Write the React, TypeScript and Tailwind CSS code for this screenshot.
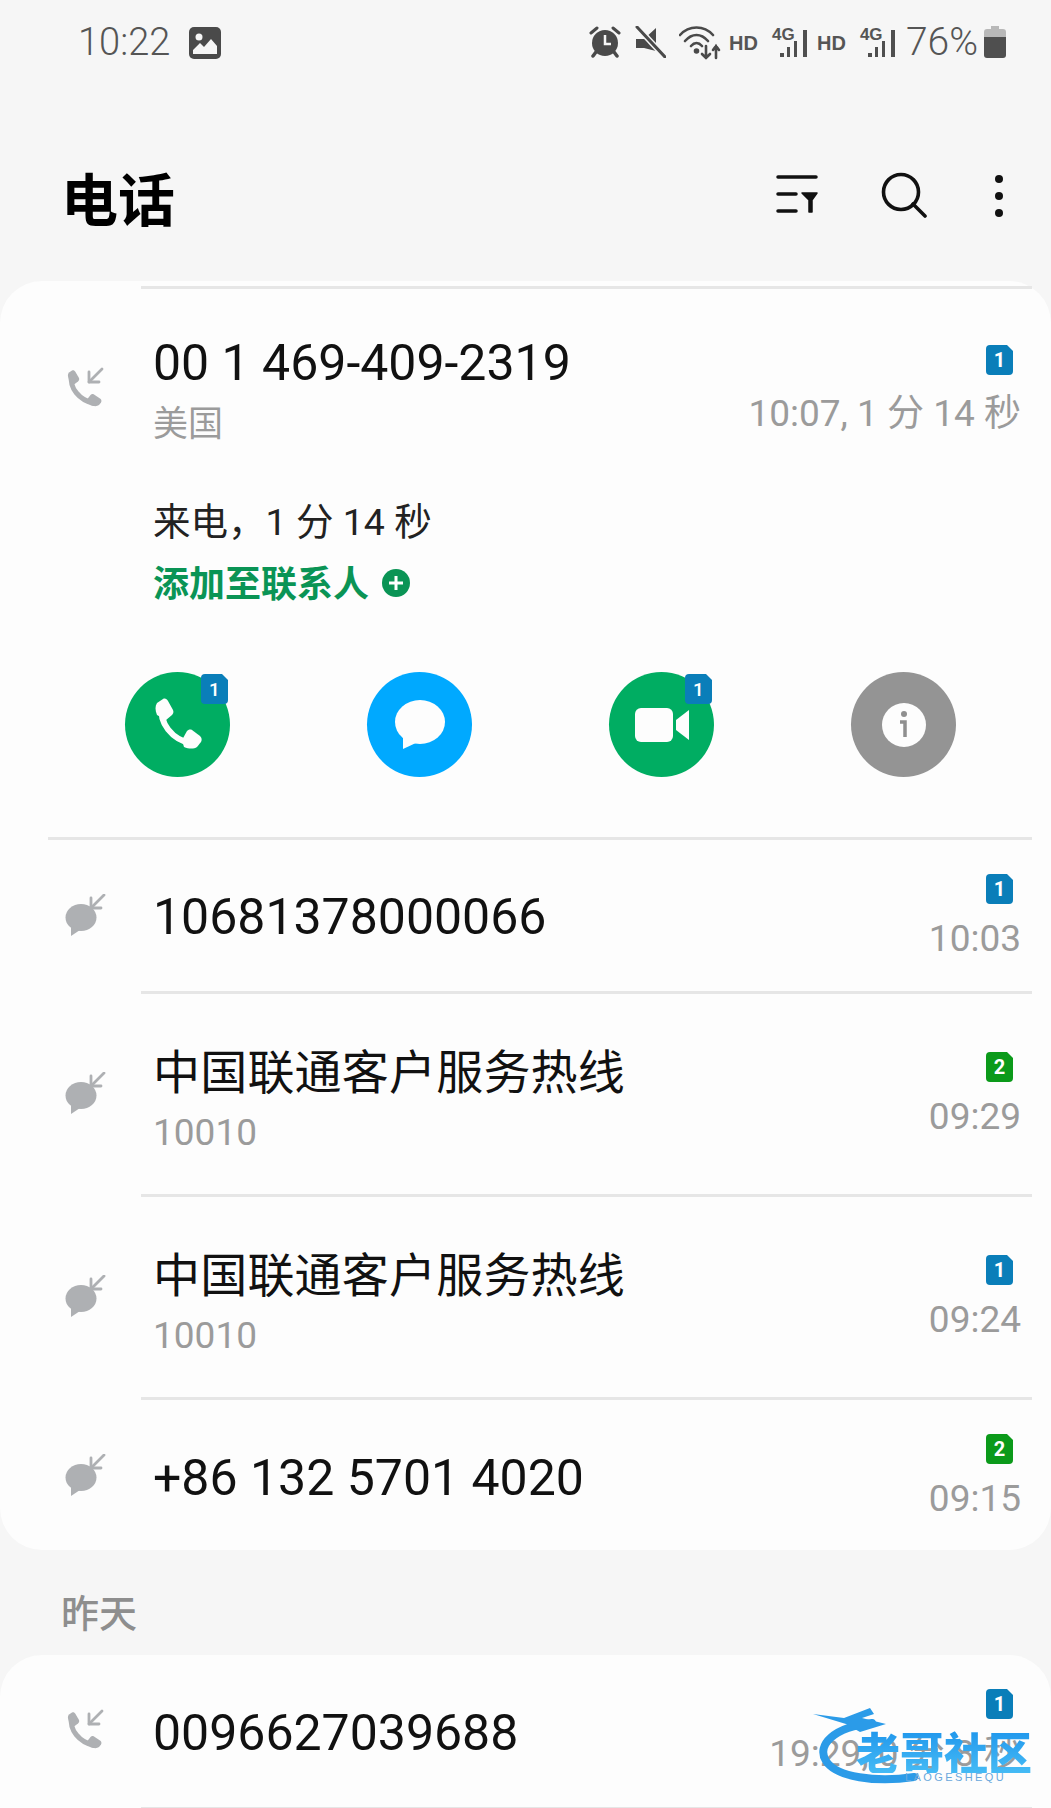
import React from "react";

const SANS = "font-['Roboto','Noto_Sans_CJK_SC',sans-serif]";

function SimBadge({ n, className = "" }: { n: 1 | 2; className?: string }) {
  const fill = n === 1 ? "#0a7eb9" : "#0b9a1a";
  return (
    <svg width="27" height="30" viewBox="0 0 27 30" className={className}>
      <path d="M4 0H21L27 6V26a4 4 0 0 1-4 4H4a4 4 0 0 1-4-4V4a4 4 0 0 1 4-4Z" fill={fill} />
      <text x="13.5" y="22" textAnchor="middle" fontSize="20" fontWeight="700" fill="#fff" fontFamily="Roboto, sans-serif">
        {n}
      </text>
    </svg>
  );
}

function InArrow({ x, y }: { x: number; y: number }) {
  return (
    <g transform={`translate(${x} ${y})`} fill="none" stroke="#aeb0b3" strokeWidth="2.8" strokeLinecap="round" strokeLinejoin="round">
      <path d="M15 1 2 14" />
      <path d="M2 4V14H12" />
    </g>
  );
}

function CallIcon() {
  return (
    <svg width="44" height="44" viewBox="0 0 44 44" className="-ml-[2px]">
      <InArrow x={24} y={1} />
      <path d="M8.5 9C6.5 21 16 33 31 36.5" fill="none" stroke="#aeb0b3" strokeWidth="5" strokeLinecap="round" />
      <path d="M6 5.5 9 3.500C10.500 3 11.500 3.500 12.500 5L16 11C16.500 12.500 16 13.500 15 14.500L11 17.500 6 13C4.500 9 4.500 7 6 5.500Z" fill="#aeb0b3" />
      <path d="M24 32.500 27.500 28C28.500 27 29.500 26.700 31 27.500L37 31.500C38.500 32.500 38.800 34 38 35.500L36 38C34 39.500 31 39.500 27 38Z" fill="#aeb0b3" />
    </svg>
  );
}

function MsgIcon() {
  return (
    <svg width="44" height="44" viewBox="0 0 44 44">
      <InArrow x={24} y={0} />
      <ellipse cx="16" cy="23.500" rx="15.500" ry="13.500" fill="#aeb0b3" />
      <path d="M6 32 6 42 15 36Z" fill="#aeb0b3" />
    </svg>
  );
}

function Row({
  h,
  icon,
  title,
  sub,
  sim,
  time,
  cjk = false,
}: {
  h: string;
  icon: "call" | "msg";
  title: string;
  sub?: string;
  sim: 1 | 2;
  time: string;
  cjk?: boolean;
}) {
  return (
    <div className={`${h} flex items-center`}>
      <div className="w-[153px] shrink-0 flex pl-[65px]">{icon === "call" ? <CallIcon /> : <MsgIcon />}</div>
      <div className={`flex-1 flex flex-col ${sub ? "pt-[12px]" : "pt-[3px]"}`}>
        <div className={`${cjk ? "text-[47px] tracking-[0.2px]" : "text-[50px]"} leading-[60px] text-[#111]`}>{title}</div>
        {sub && <div className="text-[37px] leading-[48px] mt-[6px] text-[#9b9b9b]">{sub}</div>}
      </div>
      <div className="flex flex-col items-end pr-[30px] pt-[4px]">
        <SimBadge n={sim} className="mr-[8px]" />
        <div className="text-[37px] leading-[46px] mt-[12px] text-[#9b9b9b]">{time}</div>
      </div>
    </div>
  );
}

function Divider({ left = "ml-[141px]" }: { left?: string }) {
  return <div className={`h-[3px] ${left} mr-[19px] bg-[#e6e6e6]`} />;
}

function ActionCircle({ color, badge, children }: { color: string; badge?: boolean; children: React.ReactNode }) {
  return (
    <div className={`relative w-[105px] h-[105px] rounded-full flex items-center justify-center ${color}`}>
      {children}
      {badge && (
        <svg width="27" height="30" viewBox="0 0 27 30" className="absolute top-[2px] right-[2px]">
          <path d="M4 0H21L27 6V26a4 4 0 0 1-4 4H4a4 4 0 0 1-4-4V4a4 4 0 0 1 4-4Z" fill="#0a7eb9" />
          <text x="13.5" y="22" textAnchor="middle" fontSize="19" fontWeight="500" fill="#fff" fontFamily="Roboto, sans-serif">
            1
          </text>
        </svg>
      )}
    </div>
  );
}

function Bars() {
  return (
    <svg width="30" height="28" viewBox="0 0 30 28" fill="#4f4f4f">
      <rect x="0" y="23" width="4" height="4" />
      <rect x="7" y="17" width="3" height="10" />
      <rect x="14" y="11" width="3" height="16" />
      <rect x="23" y="0" width="4" height="27" />
    </svg>
  );
}

function Net() {
  return (
    <div className="flex items-start">
      <span className="text-[20px] leading-[22px] font-bold text-[#555] mt-[10px] font-['Liberation_Sans']">HD</span>
      <div className="relative w-[50px] h-[36px] ml-[14px]">
        <span className="absolute left-0 top-[4px] text-[17px] leading-[18px] font-bold text-[#555] font-['Liberation_Sans']">4G</span>
        <div className="absolute left-[8px] top-[8px]"><Bars /></div>
      </div>
    </div>
  );
}

export default function App() {
  return (
    <div className={`relative w-[1051px] h-[1808px] overflow-hidden bg-[#f6f6f6] ${SANS}`}>
      {/* status bar */}
      <div className="h-[86px] pt-[22px] pl-[78px] pr-[45px] flex items-start">
        <span className="text-[38px] leading-[40px] font-light text-[#555]">10:22</span>
        <svg width="32" height="32" viewBox="0 0 32 32" className="ml-[19px] mt-[5px]">
          <rect width="32" height="32" rx="5" fill="#4a4a4a" />
          <circle cx="10" cy="10" r="3.500" fill="#f6f6f6" />
          <path d="M4 27V23L11 16 15 20 22 12 28 19V27Z" fill="#f6f6f6" />
        </svg>
        <div className="flex-1" />
        <svg width="32" height="32" viewBox="0 0 32 32" className="mt-[4px]">
          <path d="M2 7 8 2M30 7 24 2" stroke="#4a4a4a" strokeWidth="3" strokeLinecap="round" />
          <path d="M7 26 4 30M25 26 28 30" stroke="#4a4a4a" strokeWidth="3.500" strokeLinecap="round" />
          <circle cx="16" cy="17" r="13" fill="#4a4a4a" />
          <path d="M16 9V18H22" fill="none" stroke="#f6f6f6" strokeWidth="2.500" />
        </svg>
        <svg width="32" height="32" viewBox="0 0 32 32" className="ml-[13px] mt-[4px]">
          <path d="M2 13H10L22 2V25L10 22H2Z" fill="#4a4a4a" />
          <path d="M3 1 31 31" stroke="#f6f6f6" strokeWidth="6" />
          <path d="M3 1 31 31" stroke="#4a4a4a" strokeWidth="3" strokeLinecap="round" />
        </svg>
        <svg width="42" height="34" viewBox="0 0 42 34" className="ml-[13px] mt-[4px]" fill="none" stroke="#4a4a4a" strokeWidth="2.600" strokeLinecap="round">
          <path d="M1 9C10 -1 25 -1 34 9" />
          <path d="M6 15C13 7 22 7 29 15" />
          <path d="M12 20C15.500 16 19.500 16 23 20" />
          <circle cx="17.500" cy="25" r="1.500" fill="#4a4a4a" />
          <path d="M27 20V32M23 28 27 32 31 28" />
          <path d="M37 32V20M34 24 37 20 40 24" />
        </svg>
        <div className="ml-[8px]"><Net /></div>
        <div className="ml-[-5px]"><Net /></div>
        <span className="text-[39px] leading-[40px] font-light text-[#555] ml-[-4px]">76%</span>
        <svg width="22" height="32" viewBox="0 0 22 32" className="ml-[6px] mt-[4px]">
          <path d="M7 0H15V3H19A3 3 0 0 1 22 6V12H0V6A3 3 0 0 1 3 3H7Z" fill="#b8b8b8" />
          <path d="M0 11H22V29A3 3 0 0 1 19 32H3A3 3 0 0 1 0 29Z" fill="#4f4f4f" />
        </svg>
      </div>

      {/* header */}
      <div className="h-[195px] flex items-start pl-[65px] pr-[47px] pt-[84px]">
        <h1 className="text-[57px] leading-[64px] font-bold text-black -ml-[4px]">电话</h1>
        <div className="flex-1" />
        <svg width="42" height="40" viewBox="0 0 42 40" className="mt-[5px]" fill="none" stroke="#111" strokeWidth="3.500" strokeLinecap="round">
          <path d="M2 2H40M2 19H20M2 36H20" />
          <path d="M26 18H41L36 25V37H33V25Z" fill="#111" strokeWidth="1.500" strokeLinejoin="round" />
        </svg>
        <svg width="46" height="46" viewBox="0 0 46 46" className="ml-[63px] mt-[2px]" fill="none" stroke="#111" strokeWidth="3.600" strokeLinecap="round">
          <circle cx="20" cy="20" r="17.500" />
          <path d="M32 32 44 44" />
        </svg>
        <svg width="10" height="44" viewBox="0 0 10 44" className="ml-[67px] mt-[4px]" fill="#111">
          <circle cx="5" cy="5" r="4" />
          <circle cx="5" cy="22" r="4" />
          <circle cx="5" cy="39" r="4" />
        </svg>
      </div>

      {/* today card */}
      <div className="bg-[#fdfdfd] rounded-[42px] h-[1269px] pt-[5px]">
        <Divider />
        <div className="h-[548px] flex flex-col">
          <div className="flex">
            <div className="w-[153px] shrink-0 pl-[65px] pt-[78px]"><CallIcon /></div>
            <div className="flex-1 pt-[44px]">
              <div className="text-[50px] leading-[60px] text-[#111]">00 1 469-409-2319</div>
              <div className="text-[35px] leading-[48px] mt-[8px] text-[#9b9b9b]">美国</div>
            </div>
            <div className="flex flex-col items-end pr-[30px] pt-[56px]">
              <SimBadge n={1} className="mr-[8px]" />
              <div className="text-[37px] leading-[46px] mt-[16px] text-[#9b9b9b]">10:07, 1 分 14 秒</div>
            </div>
          </div>
          <div className="pl-[153px] mt-[50px]">
            <div className="text-[37.500px] leading-[46px] text-[#222]">来电，1 分 14 秒</div>
            <div className="flex items-center mt-[16px]">
              <span className="text-[36px] leading-[48px] font-bold text-[#0a9455]">添加至联系人</span>
              <svg width="28" height="28" viewBox="0 0 28 28" className="ml-[13px] -mt-[4px]">
                <circle cx="14" cy="14" r="14" fill="#0a9455" />
                <path d="M14 7V21M7 14H21" stroke="#fff" strokeWidth="3" />
              </svg>
            </div>
          </div>
          <div className="flex gap-[137px] pl-[125px] mt-[63px]">
            <ActionCircle color="bg-[#00ad62]" badge>
              <svg width="50" height="54" viewBox="0 0 50 54">
                <path d="M9 8C6 24 18 42 40 46" fill="none" stroke="#fdfdfd" strokeWidth="6" strokeLinecap="round" />
                <path d="M4 5 10 1C12 0 14 1 15 3L20 12C21 14 20 16 19 17L13 22 4 17C2 12 2 8 4 5Z" fill="#fdfdfd" />
                <path d="M29 42 34 33C35 32 37 31 39 32L47 38C49 40 49 42 48 44L44 49C41 51 36 51 31 49Z" fill="#fdfdfd" />
              </svg>
            </ActionCircle>
            <ActionCircle color="bg-[#00a9ff]">
              <svg width="52" height="50" viewBox="0 0 52 50" fill="#fdfdfd">
                <ellipse cx="26" cy="22" rx="25" ry="22" />
                <path d="M9 35 9 49 24 42Z" />
              </svg>
            </ActionCircle>
            <ActionCircle color="bg-[#00ad62]" badge>
              <svg width="54" height="36" viewBox="0 0 54 36" fill="#fdfdfd">
                <rect width="38" height="34" y="1" rx="6" />
                <path d="M41 13 54 3V33L41 23Z" />
              </svg>
            </ActionCircle>
            <ActionCircle color="bg-[#949494]">
              <svg width="46" height="46" viewBox="0 0 46 46">
                <circle cx="23" cy="23" r="22" fill="#fdfdfd" />
                <circle cx="23" cy="12" r="3" fill="#8f8f8f" />
                <path d="M19 20H24V35" fill="none" stroke="#8f8f8f" strokeWidth="3.500" />
              </svg>
            </ActionCircle>
          </div>
        </div>
        <Divider left="ml-[48px]" />
        <Row h="h-[151px]" icon="msg" title="10681378000066" sim={1} time="10:03" />
        <Divider />
        <Row h="h-[200px]" icon="msg" title="中国联通客户服务热线" sub="10010" sim={2} time="09:29" cjk />
        <Divider />
        <Row h="h-[200px]" icon="msg" title="中国联通客户服务热线" sub="10010" sim={1} time="09:24" cjk />
        <Divider />
        <Row h="h-[152px]" icon="msg" title="+86 132 5701 4020" sim={2} time="09:15" />
      </div>

      <div className="h-[105px] pl-[61px] pt-[44px] text-[38px] leading-[40px] font-medium text-[#8e8e8e]">昨天</div>

      {/* yesterday card */}
      <div className="bg-[#fdfdfd] rounded-t-[42px] h-[153px]">
        <Row h="h-[152px]" icon="call" title="0096627039688" sim={1} time="19:29, 0 分 8 秒" />
        <Divider left="ml-[141px]" />
      </div>

      {/* watermark */}
      <div className="absolute left-[810px] top-[1705px] w-[230px] h-[85px]">
        <svg width="230" height="85" viewBox="0 0 230 85" className="absolute left-0 top-0">
          <path d="M62 18C24 22 6 40 16 56C26 72 66 78 104 72" fill="none" stroke="#2b9be8" strokeWidth="8" strokeLinecap="round" />
          <path d="M3 9 34 13 60 3 64 9 52 13 76 19 50 27 36 19Z" fill="#2b9be8" />
        </svg>
        <div className="absolute left-[46px] top-[24px] text-[44px] leading-[44px] font-black tracking-[0px] text-transparent bg-clip-text bg-gradient-to-b from-[#1e96ec] to-[#45bbf5] font-['Noto_Sans_CJK_SC']">老哥社区</div>
        <div className="absolute left-[95px] top-[66px] text-[11px] leading-[12px] tracking-[2.400px] text-[#6aa8dc] font-['Liberation_Sans']">LAOGESHEQU</div>
      </div>
    </div>
  );
}
